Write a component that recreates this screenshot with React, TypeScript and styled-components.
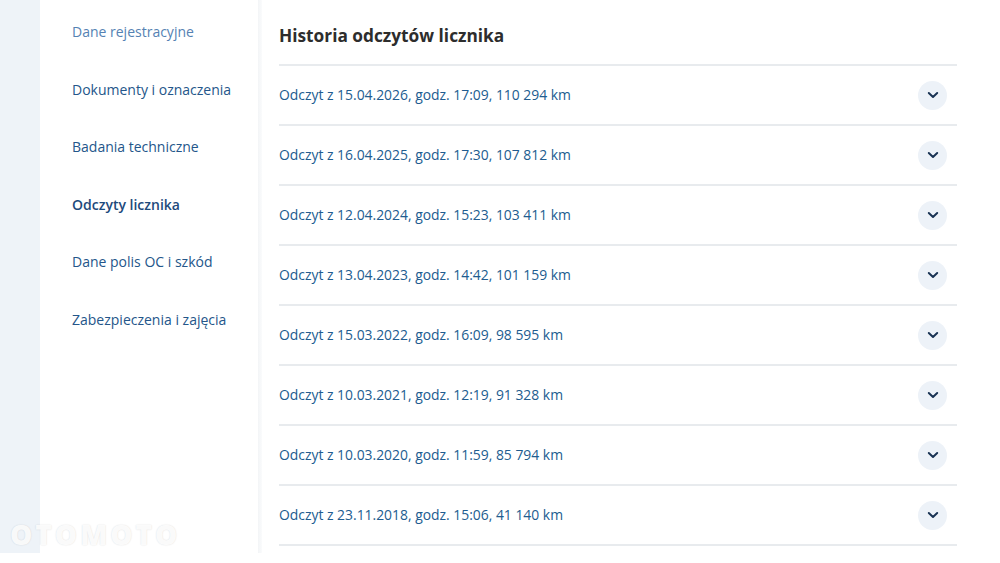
import styled, { createGlobalStyle } from "styled-components";

const readings = [
  "Odczyt z 15.04.2026, godz. 17:09, 110 294 km",
  "Odczyt z 16.04.2025, godz. 17:30, 107 812 km",
  "Odczyt z 12.04.2024, godz. 15:23, 103 411 km",
  "Odczyt z 13.04.2023, godz. 14:42, 101 159 km",
  "Odczyt z 15.03.2022, godz. 16:09, 98 595 km",
  "Odczyt z 10.03.2021, godz. 12:19, 91 328 km",
  "Odczyt z 10.03.2020, godz. 11:59, 85 794 km",
  "Odczyt z 23.11.2018, godz. 15:06, 41 140 km",
];

const navItems = [
  { label: "Dane rejestracyjne", state: "muted" },
  { label: "Dokumenty i oznaczenia", state: "normal" },
  { label: "Badania techniczne", state: "normal" },
  { label: "Odczyty licznika", state: "active" },
  { label: "Dane polis OC i szkód", state: "normal" },
  { label: "Zabezpieczenia i zajęcia", state: "normal" },
] as const;

type NavState = (typeof navItems)[number]["state"];

export default function App() {
  return (
    <>
      <GlobalStyle />
      <Page>
        <Strip />
        <Sidebar>
          {navItems.map((item) => (
            <NavLink key={item.label} $state={item.state}>
              {item.label}
            </NavLink>
          ))}
        </Sidebar>
        <Divider />
        <Main>
          <Title>Historia odczytów licznika</Title>
          <List>
            {readings.map((r) => (
              <Row key={r}>
                <RowText>{r}</RowText>
                <Toggle aria-label="Rozwiń">
                  <svg width="12" height="8" viewBox="0 0 12 8" fill="none">
                    <path
                      d="M1.8 2 6 6l4.2-4"
                      stroke="#1a3454"
                      strokeWidth="2"
                      strokeLinecap="round"
                      strokeLinejoin="round"
                    />
                  </svg>
                </Toggle>
              </Row>
            ))}
          </List>
        </Main>
        <Watermark>OTOMOTO</Watermark>
      </Page>
    </>
  );
}

const GlobalStyle = createGlobalStyle`
  html, body {
    margin: 0;
    background: #ffffff;
    font-family: "Open Sans", "Noto Sans", sans-serif;
  }
`;

const Page = styled.div({
  position: "relative",
  display: "grid",
  gridTemplateColumns: "40px 218px 4px 1fr",
  height: "553px",
  overflow: "hidden",
});

const Strip = styled.div({
  background: "#eef3f8",
});

const Sidebar = styled.nav({
  display: "flex",
  flexDirection: "column",
  gap: "33.5px",
  padding: "20px 0 0 32px",
  background: "#ffffff",
});

const navColors: Record<NavState, string> = {
  muted: "#5582b3",
  normal: "#24568a",
  active: "#1d4a7c",
};

const NavLink = styled.a<{ $state: NavState }>`
  display: block;
  font-size: 14px;
  line-height: 24px;
  color: ${(p) => navColors[p.$state]};
  font-weight: ${(p) => (p.$state === "active" ? 600 : 400)};
  white-space: nowrap;
  cursor: pointer;
`;

const Divider = styled.div({
  background: "linear-gradient(to right, #f3f5f7, #fafbfc)",
});

const Main = styled.main({
  padding: "22px 43px 0 17px",
  background: "#ffffff",
});

const Title = styled.h2({
  margin: "0 0 14px",
  fontSize: "17.3px",
  lineHeight: "28px",
  fontWeight: 700,
  color: "#2d2d2d",
});

const List = styled.div({
  borderBottom: "2px solid #e8ebee",
});

const Row = styled.div({
  display: "flex",
  alignItems: "center",
  justifyContent: "space-between",
  height: "58px",
  borderTop: "2px solid #e8ebee",
  paddingRight: "10px",
});

const RowText = styled.span({
  fontSize: "13.9px",
  color: "#215c8f",
  marginTop: "-2px",
});

const Toggle = styled.button({
  display: "flex",
  alignItems: "center",
  justifyContent: "center",
  width: "29px",
  height: "29px",
  padding: 0,
  border: "none",
  borderRadius: "50%",
  background: "#edf2f8",
  cursor: "pointer",
});

const Watermark = styled.div({
  position: "absolute",
  left: "10px",
  bottom: "0px",
  fontSize: "28px",
  fontWeight: 800,
  letterSpacing: "3px",
  color: "rgba(255,255,255,0.9)",
  textShadow: "0 0 1.5px rgba(0,0,0,0.15)",
  pointerEvents: "none",
});
